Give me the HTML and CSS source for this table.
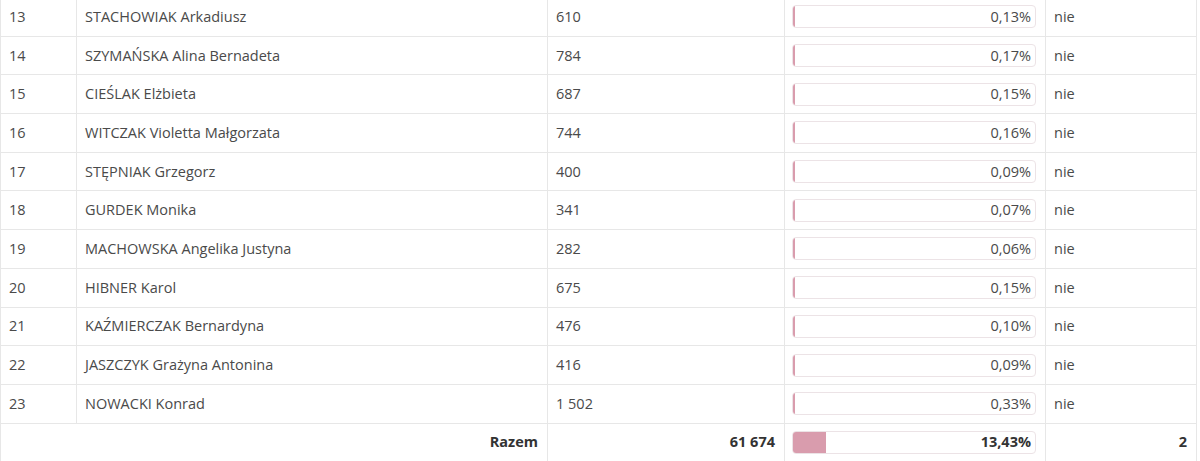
FILE: index.html
```html
<!DOCTYPE html>
<html lang="pl">
<head>
<meta charset="utf-8">
<title>Wyniki</title>
<link rel="stylesheet" href="styles.css">
</head>
<body>
<table class="results">
  <colgroup>
    <col class="c-no"><col class="c-name"><col class="c-votes"><col class="c-pct"><col class="c-mandate">
  </colgroup>
  <tbody>
    <tr><td>13</td><td>STACHOWIAK Arkadiusz</td><td>610</td><td><div class="bar"><span class="fill" style="width:0.13%"></span><span class="label">0,13%</span></div></td><td>nie</td></tr>
    <tr><td>14</td><td>SZYMAŃSKA Alina Bernadeta</td><td>784</td><td><div class="bar"><span class="fill" style="width:0.17%"></span><span class="label">0,17%</span></div></td><td>nie</td></tr>
    <tr><td>15</td><td>CIEŚLAK Elżbieta</td><td>687</td><td><div class="bar"><span class="fill" style="width:0.15%"></span><span class="label">0,15%</span></div></td><td>nie</td></tr>
    <tr><td>16</td><td>WITCZAK Violetta Małgorzata</td><td>744</td><td><div class="bar"><span class="fill" style="width:0.16%"></span><span class="label">0,16%</span></div></td><td>nie</td></tr>
    <tr><td>17</td><td>STĘPNIAK Grzegorz</td><td>400</td><td><div class="bar"><span class="fill" style="width:0.09%"></span><span class="label">0,09%</span></div></td><td>nie</td></tr>
    <tr><td>18</td><td>GURDEK Monika</td><td>341</td><td><div class="bar"><span class="fill" style="width:0.07%"></span><span class="label">0,07%</span></div></td><td>nie</td></tr>
    <tr><td>19</td><td>MACHOWSKA Angelika Justyna</td><td>282</td><td><div class="bar"><span class="fill" style="width:0.06%"></span><span class="label">0,06%</span></div></td><td>nie</td></tr>
    <tr><td>20</td><td>HIBNER Karol</td><td>675</td><td><div class="bar"><span class="fill" style="width:0.15%"></span><span class="label">0,15%</span></div></td><td>nie</td></tr>
    <tr><td>21</td><td>KAŹMIERCZAK Bernardyna</td><td>476</td><td><div class="bar"><span class="fill" style="width:0.10%"></span><span class="label">0,10%</span></div></td><td>nie</td></tr>
    <tr><td>22</td><td>JASZCZYK Grażyna Antonina</td><td>416</td><td><div class="bar"><span class="fill" style="width:0.09%"></span><span class="label">0,09%</span></div></td><td>nie</td></tr>
    <tr><td>23</td><td>NOWACKI Konrad</td><td>1 502</td><td><div class="bar"><span class="fill" style="width:0.33%"></span><span class="label">0,33%</span></div></td><td>nie</td></tr>
    <tr class="total"><td colspan="2" class="num">Razem</td><td class="num">61 674</td><td><div class="bar"><span class="fill" style="width:13.43%"></span><span class="label">13,43%</span></div></td><td class="num">2</td></tr>
  </tbody>
</table>
</body>
</html>
```
FILE: styles.css
```css
html, body {
  margin: 0;
  padding: 0;
  background: #ffffff;
}

body {
  font-family: "Open Sans", "Liberation Sans", sans-serif;
  font-size: 14.5px;
  line-height: 20px;
  color: #4a4a4a;
}

.results {
  border-collapse: collapse;
  table-layout: fixed;
  width: 1196px;
  margin-top: -3px;
}

.c-no { width: 76px; }
.c-name { width: 471px; }
.c-votes { width: 237px; }
.c-pct { width: 261px; }
.c-mandate { width: 151px; }

.results tr {
  height: 38.7px;
}

.results td {
  border: 1px solid #e7e7e7;
  padding: 0 8px;
  vertical-align: middle;
  white-space: nowrap;
}

.results .num {
  text-align: right;
  padding-right: 9px;
}

.total td {
  font-weight: 700;
  color: #333333;
}

.bar {
  position: relative;
  box-sizing: border-box;
  height: 23px;
  margin: 0 1px 0 -1px;
  border: 1px solid #ece3e6;
  border-radius: 4px;
  background: #ffffff;
  display: flex;
  align-items: center;
  justify-content: flex-end;
  padding-right: 4px;
  overflow: hidden;
}

.fill {
  position: absolute;
  left: 0;
  top: 0;
  bottom: 0;
  min-width: 1.5px;
  background: #d99cad;
}

.label {
  position: relative;
  line-height: 20px;
}
```
